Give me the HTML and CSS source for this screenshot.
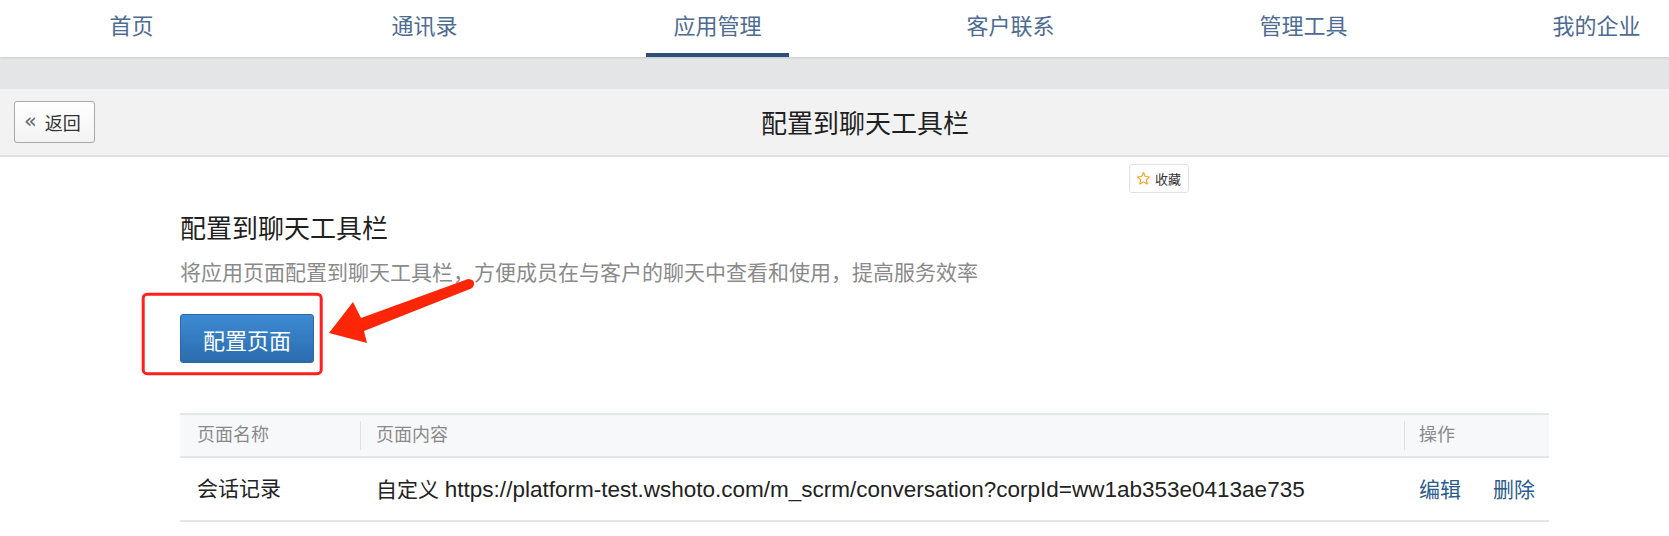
FILE: index.html
```html
<!DOCTYPE html>
<html lang="zh-CN">
<head>
<meta charset="utf-8">
<title>配置到聊天工具栏</title>
<link rel="stylesheet" href="styles.css">
</head>
<body>
  <nav class="topnav">
    <ul class="topnav-list">
      <li class="nav-item"><a class="nav-link">首页</a></li>
      <li class="nav-item"><a class="nav-link">通讯录</a></li>
      <li class="nav-item"><a class="nav-link is-active">应用管理</a></li>
      <li class="nav-item"><a class="nav-link">客户联系</a></li>
      <li class="nav-item"><a class="nav-link">管理工具</a></li>
      <li class="nav-item"><a class="nav-link">我的企业</a></li>
    </ul>
  </nav>
  <div class="gray-band"></div>
  <header class="page-header">
    <a class="back-btn"><span class="back-arrows">«</span><span>返回</span></a>
    <h1 class="page-title">配置到聊天工具栏</h1>
  </header>

  <main class="main">
    <div class="fav-row">
      <a class="fav-btn">
        <svg class="fav-star" viewBox="0 0 24 24" width="15" height="15"><path d="M12 2.5l2.9 6.3 6.8.7-5.1 4.6 1.5 6.8L12 17.4l-6.1 3.5 1.5-6.8L2.3 9.5l6.8-.7z" fill="none" stroke="#f5a01a" stroke-width="1.8" stroke-linejoin="round"/></svg>
        <span>收藏</span>
      </a>
    </div>
    <h2 class="section-title">配置到聊天工具栏</h2>
    <p class="section-desc">将应用页面配置到聊天工具栏，方便成员在与客户的聊天中查看和使用，提高服务效率</p>
    <div class="action-row">
      <button class="primary-btn">配置页面</button>
    </div>

    <div class="table">
      <div class="table-head">
        <div class="cell col-name">页面名称</div>
        <div class="cell col-content has-sep">页面内容</div>
        <div class="cell col-op has-sep">操作</div>
      </div>
      <div class="table-row">
        <div class="cell col-name">会话记录</div>
        <div class="cell col-content"><span class="url-type">自定义</span> <span class="url">https://platform-test.wshoto.com/m_scrm/conversation?corpId=ww1ab353e0413ae735</span></div>
        <div class="cell col-op"><a class="op-link">编辑</a><a class="op-link">删除</a></div>
      </div>
    </div>
  </main>

  <svg class="annot" viewBox="0 0 1669 536" width="1669" height="536">
    <rect x="143.2" y="294.2" width="178" height="79.5" rx="4" fill="none" stroke="#ff1f1f" stroke-width="3"/>
    <path d="M329 333 L353 302 L361 318 L468 279 Q475 279 474 285 Q473 288 470 289 L364 331 L367 343 Z" fill="#ff2608"/>
  </svg>
</body>
</html>
```

FILE: styles.css
```css
* { box-sizing: border-box; }

html, body {
  margin: 0;
  padding: 0;
}

body {
  width: 1669px;
  height: 536px;
  overflow: hidden;
  background: #fff;
  font-family: "Liberation Sans", "Noto Sans CJK SC", sans-serif;
  color: #222;
}

/* top nav */
.topnav {
  height: 57px;
  background: #fff;
  box-shadow: 0 1px 2px rgba(0, 0, 0, 0.12);
  position: relative;
  z-index: 1;
  overflow: hidden;
}

.topnav-list {
  display: flex;
  width: 1758px;
  margin: 0 0 0 -15px;
  padding: 0;
  list-style: none;
}

.nav-item {
  flex: 1 1 0;
  text-align: center;
}

.nav-link {
  display: inline-block;
  height: 57px;
  padding: 0 27px;
  font-family: "Noto Sans CJK SC", sans-serif;
  font-size: 22px;
  line-height: 49px;
  color: #4e6b91;
  border-bottom: 4px solid transparent;
}

.nav-link.is-active {
  border-bottom-color: #2c4e79;
}

.gray-band {
  height: 32px;
  background: #e4e5e7;
}

/* page header */
.page-header {
  height: 68px;
  background: #f2f2f2;
  border-bottom: 2px solid #dde0e4;
  display: flex;
  align-items: center;
  padding: 0 14px;
}

.back-btn {
  display: flex;
  align-items: center;
  width: 81px;
  height: 42px;
  padding-left: 9px;
  border: 1px solid #a8a8a8;
  border-radius: 3px;
  background: linear-gradient(#ffffff, #f3f3f3);
  font-family: "Noto Sans CJK SC", sans-serif;
  font-size: 18px;
  color: #333;
}

.back-arrows {
  font-family: "DejaVu Sans", sans-serif;
  font-size: 21px;
  line-height: 1;
  color: #666;
  margin-right: 8px;
  margin-top: -2px;
}

.page-title {
  flex: 1;
  margin: 0 20px 0 0;
  text-align: center;
  font-family: "Noto Sans CJK SC", sans-serif;
  font-size: 26px;
  font-weight: 400;
  line-height: 36px;
  color: #1f1f1f;
}

/* main */
.main {
  padding-left: 180px;
}

.fav-row {
  display: flex;
  padding-top: 7px;
  margin-left: 949px;
}

.fav-btn {
  display: flex;
  align-items: center;
  height: 29px;
  padding: 0 7px 0 6px;
  border: 1px solid #e2e2e2;
  border-radius: 3px;
  background: #fff;
  font-family: "Noto Sans CJK SC", sans-serif;
  font-size: 13px;
  color: #333;
}

.fav-star {
  margin-right: 4px;
}

.section-title {
  margin: 18px 0 0;
  font-family: "Noto Sans CJK SC", sans-serif;
  font-size: 26px;
  font-weight: 400;
  line-height: 32px;
  color: #1f1f1f;
}

.section-desc {
  margin: 13px 0 0;
  font-family: "Noto Sans CJK SC", sans-serif;
  font-size: 21px;
  line-height: 30px;
  color: #8a8a8a;
}

.action-row {
  display: flex;
  margin-top: 28px;
}

.primary-btn {
  width: 134px;
  height: 49px;
  border: 1px solid #2a68a8;
  border-radius: 3px;
  background: linear-gradient(#3d8bd3, #2b6cae);
  color: #fff;
  font-family: "Noto Sans CJK SC", sans-serif;
  font-size: 22px;
  padding: 0;
  cursor: pointer;
}

/* table */
.table {
  width: 1369px;
  margin-top: 50px;
  border-top: 2px solid #e4e6e9;
}

.table-head,
.table-row {
  display: grid;
  grid-template-columns: 180px 1044px 145px;
  align-items: center;
}

.table-head {
  height: 43px;
  background: #f7f8fa;
  border-bottom: 2px solid #e4e6e9;
}

.table-row {
  height: 64px;
  border-bottom: 2px solid #e4e6e9;
}

.cell {
  font-family: "Liberation Sans", "Noto Sans CJK SC", sans-serif;
  white-space: nowrap;
}

.table-head .cell {
  position: relative;
  font-size: 18px;
  color: #8a8a8a;
  line-height: 41px;
}

.has-sep::before {
  content: "";
  position: absolute;
  left: 0;
  top: 6px;
  bottom: 6px;
  width: 1px;
  background: #dfe1e4;
}

.col-name { padding-left: 17px; }
.col-content { padding-left: 16px; }
.col-op { padding-left: 15px; }

.table-row .cell {
  font-size: 21px;
  line-height: 30px;
  color: #222;
}

.url-type {
  font-family: "Noto Sans CJK SC", sans-serif;
}

.url {
  font-size: 22.5px;
}

.op-link {
  font-family: "Noto Sans CJK SC", sans-serif;
  color: #2b5b8e;
}

.op-link + .op-link {
  margin-left: 32px;
}

/* annotation overlay */
.annot {
  position: absolute;
  left: 0;
  top: 0;
  pointer-events: none;
}
```
